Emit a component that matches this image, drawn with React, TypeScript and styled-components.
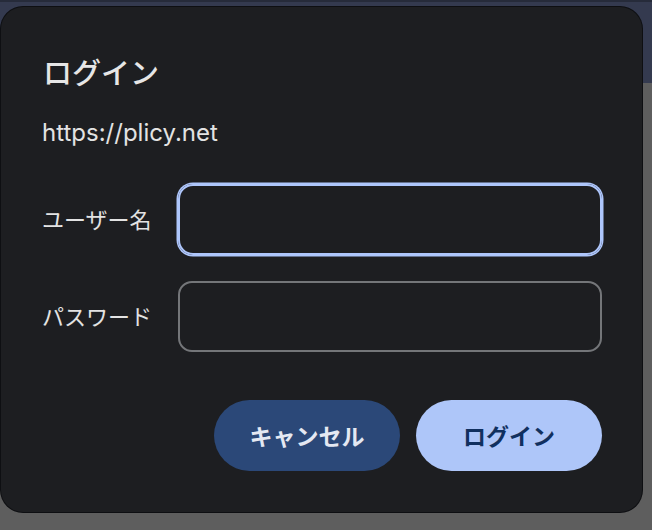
import styled, { createGlobalStyle } from 'styled-components'

const GlobalStyle = createGlobalStyle`
  html, body {
    margin: 0;
    padding: 0;
    background: #5e5e5e;
  }
  body {
    font-family: "Inter", "Noto Sans CJK JP", sans-serif;
  }
`

const Pagina = styled.div`
  position: relative;
  width: 652px;
  height: 530px;
  overflow: hidden;
  background: #5e5e5e;
`

const Cabecalho = styled.div`
  height: 83px;
  background: #343a4f;
  border-top: 2px solid #262b3a;
  box-sizing: border-box;
`

const Dialogo = styled.div`
  position: absolute;
  top: 7px;
  left: 1px;
  width: 641px;
  box-sizing: border-box;
  padding: 41px 40px 41px 41px;
  background: #1d1e21;
  border-radius: 22px;
  box-shadow: 0 0 0 1px #0e0f12;
  color: #e3e3e3;
`

const Titulo = styled.h1`
  margin: 0 0 0 1px;
  font-family: "Noto Sans CJK JP", sans-serif;
  font-size: 29px;
  line-height: 47px;
  font-weight: 500;
  color: #e6e6e6;
`

const Endereco = styled.p`
  margin: 22px 0 0;
  font-size: 24px;
  line-height: 32px;
  font-weight: 400;
  color: #e3e3e3;
`

const Formulario = styled.div`
  display: grid;
  grid-template-columns: 136px 1fr;
  row-gap: 26px;
  align-items: center;
  margin-top: 35px;
`

const Rotulo = styled.label`
  font-family: "Noto Sans CJK JP", sans-serif;
  font-size: 22px;
  line-height: 28px;
  padding-bottom: 3px;
  color: #e3e3e3;
`

const Campo = styled.input<{ $foco?: boolean }>`
  box-sizing: border-box;
  width: 100%;
  height: 71px;
  background: transparent;
  border: 2px solid ${p => (p.$foco ? '#aec6fb' : '#747679')};
  border-radius: ${p => (p.$foco ? '15px' : '14px')};
  box-shadow: ${p => (p.$foco ? '0 0 0 1.5px #aec6fb' : 'none')};
  outline: none;
  color: #e3e3e3;
  font-size: 20px;
  padding: 0 18px;
`

const Acoes = styled.div`
  display: flex;
  justify-content: flex-end;
  gap: 16px;
  margin-top: 48px;
`

const Botao = styled.button<{ $primario?: boolean }>`
  width: 186px;
  height: 71px;
  border: 0;
  border-radius: 36px;
  background: ${p => (p.$primario ? '#aec6f9' : '#2b4878')};
  color: ${p => (p.$primario ? '#11305f' : '#e4e8f2')};
  font-family: "Noto Sans CJK JP", sans-serif;
  font-size: 23px;
  font-weight: 700;
  padding-bottom: 2px;
  cursor: pointer;
`

const App = () => {
  return (
    <Pagina>
      <GlobalStyle />
      <Cabecalho />

      <Dialogo>
        <Titulo>ログイン</Titulo>
        <Endereco>https://plicy.net</Endereco>

        <Formulario>
          <Rotulo>ユーザー名</Rotulo>
          <Campo $foco />
          <Rotulo>パスワード</Rotulo>
          <Campo type="password" />
        </Formulario>

        <Acoes>
          <Botao>キャンセル</Botao>
          <Botao $primario>ログイン</Botao>
        </Acoes>
      </Dialogo>
    </Pagina>
  )
}

export default App
